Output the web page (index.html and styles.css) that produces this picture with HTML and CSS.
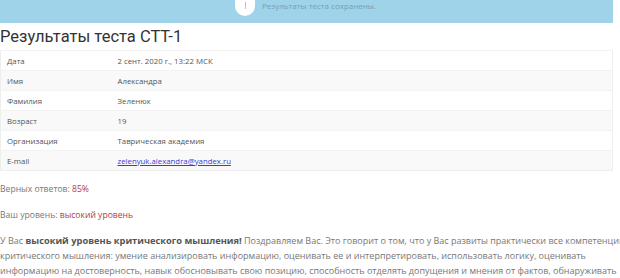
FILE: index.html
```html
<!DOCTYPE html>
<html lang="ru">
<head>
    <meta charset="UTF-8">
    <title>Результаты теста СТТ-1</title>
    <link rel="stylesheet" href="styles.css">
</head>
<body>
    <div class="page">
        <div class="alert">
            <span class="alert-icon"><span class="alert-bar"></span></span>
            <span class="alert-text">Результаты теста сохранены.</span>
        </div>

        <h1 class="title">Результаты теста СТТ-1</h1>

        <table class="info-table">
            <tr><td class="label">Дата</td><td>2 сент. 2020 г., 13:22 МСК</td></tr>
            <tr><td class="label">Имя</td><td>Александра</td></tr>
            <tr><td class="label">Фамилия</td><td>Зеленюк</td></tr>
            <tr><td class="label">Возраст</td><td>19</td></tr>
            <tr><td class="label">Организация</td><td>Таврическая академия</td></tr>
            <tr><td class="label">E-mail</td><td><a href="#">zelenyuk.alexandra@yandex.ru</a></td></tr>
        </table>

        <p class="stat">Верных ответов: <span class="accent">85%</span></p>
        <p class="stat">Ваш уровень: <span class="accent">высокий уровень</span></p>

        <p class="desc">У Вас <b>высокий уровень критического мышления!</b> Поздравляем Вас. Это говорит о том, что у Вас развиты практически все компетенции<br>
        критического мышления: умение анализировать информацию, оценивать ее и интерпретировать, использовать логику, оценивать<br>
        информацию на достоверность, навык обосновывать свою позицию, способность отделять допущения и мнения от фактов, обнаруживать<br>
        ошибки в рассуждениях.</p>
    </div>
</body>
</html>
```

FILE: styles.css
```css
body {
    margin: 0;
    background: #fff;
    font-family: "Open Sans", sans-serif;
    color: #777;
    overflow: hidden;
}
.page {
    width: 613px;
}
.alert {
    height: 23px;
    background-color: #9fd3ea;
    display: flex;
    align-items: flex-start;
    padding-left: 235px;
    box-sizing: border-box;
    gap: 7px;
}
.alert-icon {
    width: 20px;
    height: 22px;
    border-radius: 0 0 10px 10px;
    background: #fff;
    margin-top: -6px;
    display: flex;
    justify-content: center;
    align-items: flex-end;
    padding-bottom: 7px;
    box-sizing: border-box;
}
.alert-bar {
    width: 1px;
    height: 7px;
    background: #c4c4c4;
}
.alert-text {
    font-size: 8px;
    line-height: 11px;
    color: #729fb6;
}
.title {
    font-family: Roboto, "Liberation Sans", sans-serif;
    font-weight: normal;
    font-size: 16.5px;
    line-height: 20px;
    color: #333;
    margin: 4px 0 3px;
}
.info-table {
    width: 100%;
    border-collapse: collapse;
    border: 1px solid #eee;
    font-size: 7.8px;
    color: #555;
}
.info-table td {
    height: 20px;
    padding: 0 6px;
    border-top: 1px solid #f2f2f2;
    box-sizing: border-box;
}
.info-table td.label {
    width: 111px;
}
.info-table tr:nth-child(even) td {
    background: #f9f9f9;
}
.info-table a {
    color: #3b3bd6;
}
.stat {
    font-size: 8.6px;
    margin: 12px 0 0;
    line-height: 13px;
}
.stat + .stat {
    margin-top: 13px;
}
.accent {
    color: #b03a48;
}
.desc {
    font-size: 9px;
    line-height: 15px;
    white-space: nowrap;
    margin: 11px 0 0;
}
.desc b {
    font-size: 9.3px;
    color: #555;
}
```
